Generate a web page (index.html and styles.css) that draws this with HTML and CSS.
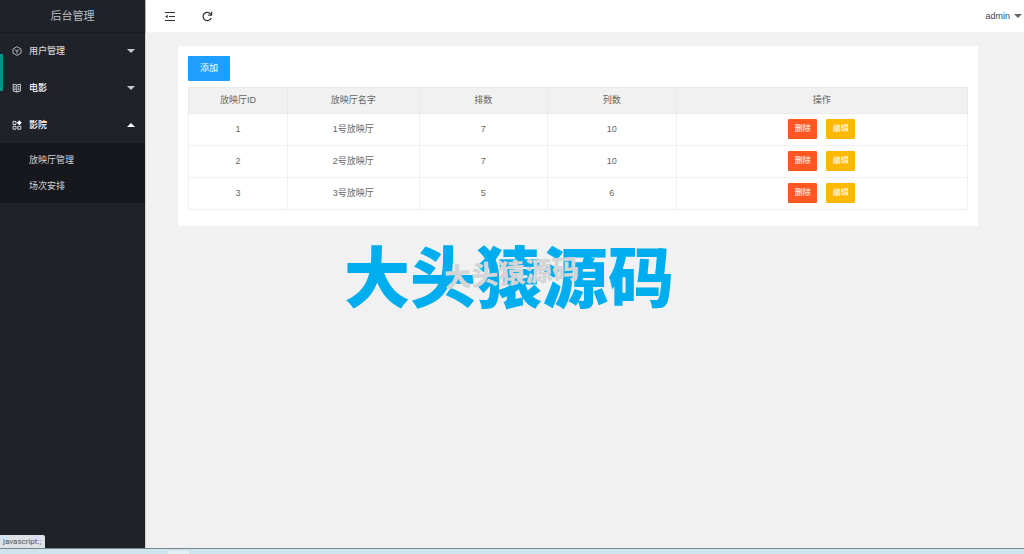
FILE: index.html
```html
<!DOCTYPE html>
<html lang="zh-CN">
<head>
<meta charset="utf-8">
<title>后台管理</title>
<link rel="stylesheet" href="styles.css">
</head>
<body>
<div class="app">
  <aside class="sidebar">
    <div class="brand">后台管理</div>
    <nav class="menu">
      <a class="menu-item" href="#">
        <svg class="menu-icon" viewBox="0 0 10 10"><path d="M5 .7 9 2.9v4.3L5 9.4 1 7.2V2.9z M2.8 3.7 5 5l2.2-1.3M5 5v2.6" /></svg>
        <span>用户管理</span><i class="caret"></i>
      </a>
      <a class="menu-item menu-item-hover" href="#">
        <svg class="menu-icon" viewBox="0 0 10 10"><path d="M1.2 1.2 4.8 2v7L1.2 8zM4.8 2l3.6-.8V8L4.8 9M2.3 3.5l1.4.3M2.3 5l1.4.3M2.3 6.5l1.4.3M6 3.8l1.3-.3M6 5.3 7.3 5M6 6.8l1.3-.3" /></svg>
        <span>电影</span><i class="caret"></i>
      </a>
      <a class="menu-item menu-item-open" href="#">
        <svg class="menu-icon" viewBox="0 0 10 10"><path d="M1 1.4h3v3H1zM1 6.2h3v3H1zM5.8 6.2h3v3h-3z" /><path class="solid" d="M7.3.3 9.8 2.8 7.3 5.3 4.8 2.8z" /></svg>
        <span>影院</span><i class="caret caret-up"></i>
      </a>
      <div class="submenu">
        <a href="#">放映厅管理</a>
        <a href="#">场次安排</a>
      </div>
    </nav>
    <div class="link-status">javascript:;</div>
  </aside>
  <div class="main">
    <header class="topbar">
      <button class="tool" type="button" aria-label="折叠菜单">
        <svg viewBox="0 0 12 12"><path d="M1 2.5h10M5 6.5h6M1 10.5h10" /><path class="solid" d="M3.7 4.8v3.4L1.2 6.5z" /></svg>
      </button>
      <button class="tool" type="button" aria-label="刷新">
        <svg viewBox="0 0 12 12"><path d="M9.8 4.2A4.2 4.2 0 1 0 10.2 8M10.6 1.8v3.4H7.2" /></svg>
      </button>
      <a class="user" href="#">admin<i class="caret caret-dark"></i></a>
    </header>
    <main class="content">
      <section class="card">
        <button class="btn btn-add" type="button">添加</button>
        <table class="halls">
          <colgroup><col class="c-id"><col class="c-name"><col class="c-num"><col class="c-num"><col></colgroup>
          <thead><tr><th>放映厅ID</th><th>放映厅名字</th><th>排数</th><th>列数</th><th>操作</th></tr></thead>
          <tbody>
            <tr><td>1</td><td>1号放映厅</td><td>7</td><td>10</td><td><div class="actions"><button class="btn btn-del" type="button">删除</button><button class="btn btn-edit" type="button">编辑</button></div></td></tr>
            <tr><td>2</td><td>2号放映厅</td><td>7</td><td>10</td><td><div class="actions"><button class="btn btn-del" type="button">删除</button><button class="btn btn-edit" type="button">编辑</button></div></td></tr>
            <tr><td>3</td><td>3号放映厅</td><td>5</td><td>6</td><td><div class="actions"><button class="btn btn-del" type="button">删除</button><button class="btn btn-edit" type="button">编辑</button></div></td></tr>
          </tbody>
        </table>
      </section>
      <div class="watermark">大头猿源码<span class="watermark-small">大头猿源码</span></div>
    </main>
  </div>
</div>
<div class="taskbar"><span class="task"></span></div>
</body>
</html>
```
FILE: styles.css
```css
* { box-sizing: border-box; }
body {
  margin: 0;
  min-height: 100vh;
  display: flex;
  flex-direction: column;
  background: #f1f1f1;
  color: #666;
  font: 9px/14px "Liberation Sans", "Noto Sans CJK SC", sans-serif;
}
a { color: inherit; text-decoration: none; }
button { font: inherit; border: 0; padding: 0; cursor: pointer; }
svg { display: block; fill: none; stroke: currentColor; }
.solid { fill: currentColor; stroke: none; }

.app { flex: 1; display: flex; }
.sidebar {
  position: relative;
  width: 145px;
  flex: none;
  background: #20222a;
  color: #d2d3d5;
}
.brand {
  height: 32px;
  line-height: 32px;
  font-size: 11px;
  text-align: center;
  color: #bcbdbf;
  box-shadow: 0 1px 1px #1a1c22;
}
.menu-item {
  position: relative;
  display: flex;
  align-items: center;
  gap: 7px;
  height: 37px;
  padding: 0 10px 0 12px;
  font-weight: 500;
}
.menu-item-hover, .menu-item-open { color: #fff; }
.menu-item-hover::before {
  content: "";
  position: absolute;
  left: 0;
  top: -15px;
  width: 3px;
  height: 37px;
  background: #009688;
}
.menu-icon { width: 10px; height: 10px; stroke-width: 0.8; }
.caret {
  margin-left: auto;
  border: 4px solid transparent;
  border-top-color: #c8c9cb;
  border-bottom-width: 0;
}
.caret-up {
  border-top-width: 0;
  border-bottom: 4px solid #fff;
}
.submenu { padding: 4px 0; background: #17181d; }
.submenu a { display: block; padding-left: 29px; line-height: 26px; }
.link-status {
  position: absolute;
  left: 0;
  bottom: 0;
  padding: 0 4px 0 3px;
  border-radius: 0 2px 0 0;
  background: #dee1e6;
  color: #555;
  font: 8px/13px Roboto, sans-serif;
}

.main { flex: 1; min-width: 0; border-left: 1px solid #d0d0d2; }
.topbar {
  display: flex;
  align-items: center;
  gap: 25px;
  height: 33px;
  padding: 0 2px 0 18px;
  background: #fff;
  border-bottom: 1px solid #f4f4f4;
}
.tool { background: none; color: #333; }
.tool svg { width: 12px; height: 12px; stroke-width: 1.2; }
.user { display: flex; align-items: center; gap: 4px; margin-left: auto; color: #444; }
.caret-dark { border-top-color: #666; }

.content { padding: 13px 46px 0 32px; }
.card { padding: 10px 10px 16px; background: #fff; }
.btn { border-radius: 1px; color: #fff; }
.btn-add {
  display: block;
  margin-bottom: 6px;
  padding: 0 12px;
  line-height: 25px;
  background: #1e9fff;
}
.halls { width: 100%; table-layout: fixed; border-collapse: collapse; }
.halls th, .halls td {
  height: 32px;
  padding: 0 0 1px;
  border: 1px solid #f0f0f0;
  text-align: center;
  font-weight: 400;
}
.halls th { height: 26px; background: #f1f1f1; border-color: #ebebeb; }
.c-id { width: 12.7%; }
.c-name { width: 16.9%; }
.c-num { width: 16.5%; }
.actions { display: flex; justify-content: center; gap: 9px; }
.actions .btn { width: 29px; font-size: 8px; line-height: 20px; }
.btn-del { background: #ff5722; }
.btn-edit { background: #ffb800; }

.watermark {
  position: relative;
  width: max-content;
  margin: 9px auto 0;
  padding-right: 138px;
  color: #00aeef;
  font: 900 66px/76px "Noto Sans CJK SC", sans-serif;
}
.watermark-small {
  position: absolute;
  left: 100px;
  top: 17px;
  color: #d3d5d7;
  font-size: 27px;
  line-height: 40px;
  transform: rotate(-4deg);
}

.taskbar {
  height: 6px;
  padding-left: 168px;
  border-top: 1px solid #77868c;
  background: #cfe5ec;
}
.task { display: block; width: 21px; height: 3px; margin-top: 2px; background: #e6f0f4; }
```
